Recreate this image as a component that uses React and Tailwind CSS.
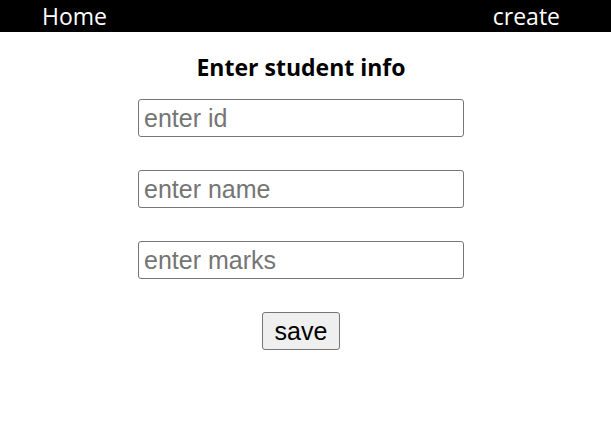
export default function App() {
  return (
    <div className="min-h-screen bg-white font-['Open_Sans',sans-serif] text-black">
      <nav className="flex h-8 items-center justify-between bg-black pl-[42px] pr-[51px] text-[23px] leading-none text-white">
        <a href="#" className="block">Home</a>
        <a href="#" className="block">create</a>
      </nav>
      <div className="flex flex-col items-center pr-[9px]">
        <h2 className="mt-[20px] text-[23px] font-bold leading-[30px]">Enter student info</h2>
        <form className="mt-[17px] flex flex-col items-center gap-[33px]">
          <Field placeholder="enter id" />
          <Field placeholder="enter name" />
          <Field placeholder="enter marks" />
          <button
            type="button"
            className="h-[38px] w-[78px] rounded-[3px] border border-[#767676] bg-[#efefef] font-['Liberation_Sans',Arial,sans-serif] text-[25px] leading-none text-black"
          >
            save
          </button>
        </form>
      </div>
    </div>
  );
}

function Field({ placeholder }) {
  return (
    <input
      type="text"
      placeholder={placeholder}
      className="h-[38px] w-[326px] rounded-[3px] border border-[#767676] bg-white px-[5px] font-['Liberation_Sans',Arial,sans-serif] text-[25px] text-black placeholder:text-[#757575] outline-none"
    />
  );
}
